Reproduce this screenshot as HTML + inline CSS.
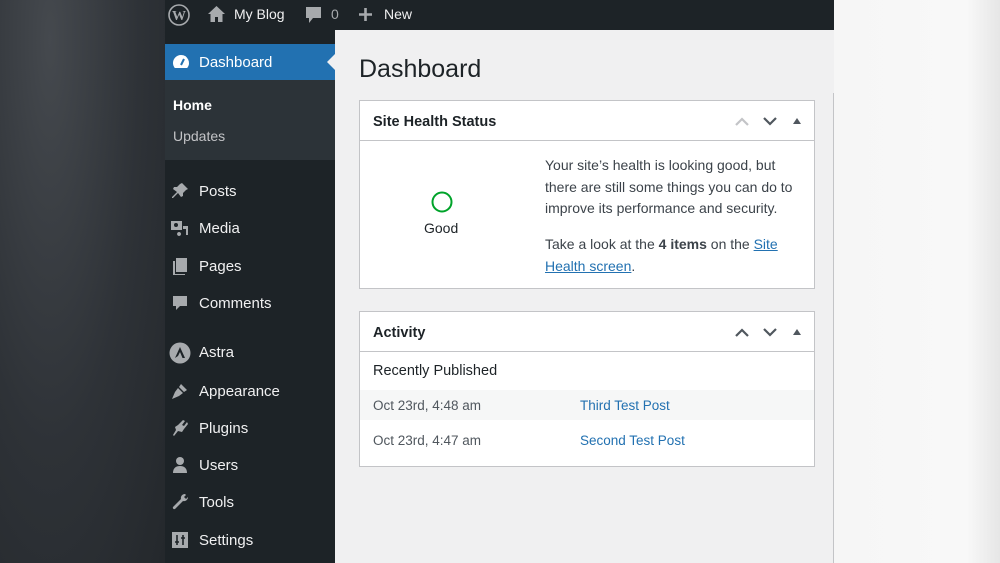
<!DOCTYPE html>
<html><head><meta charset="utf-8"><style>
*{margin:0;padding:0;box-sizing:border-box}
body{width:1000px;height:563px;overflow:hidden;position:relative;font-family:"Liberation Sans",sans-serif;background:#f0f0f1}
.lb{position:absolute;left:0;top:0;width:165px;height:563px;background:radial-gradient(ellipse at 50px 40px,#45494e 0,#2e3237 55%,#24282c 100%)}
.rb{position:absolute;left:834px;top:0;width:166px;height:563px;background:linear-gradient(90deg,#f6f6f6 0,#f8f8f8 80%,#e6e6e6 100%)}
.bar{position:absolute;left:165px;top:0;width:669px;height:30px;background:#1d2327;color:#f0f0f1;font-size:14px}
.bar span{position:absolute;top:6px}
.side{position:absolute;left:165px;top:30px;width:170px;height:533px;background:#1d2327}
.dash{position:absolute;left:0;top:14px;width:170px;height:36px;background:#2271b1;color:#fff;font-size:15px}
.dash:after{content:"";position:absolute;right:0;top:10px;border:8px solid transparent;border-right-color:#f0f0f1}
.sub{position:absolute;left:0;top:50px;width:170px;height:80px;background:#2c3338}
.sub div{position:absolute;left:8px;font-size:14px}
.mi{position:absolute;left:34px;color:#f0f0f1;font-size:15px}
.ic{position:absolute;left:5px;width:20px;height:20px}
.main{position:absolute;left:335px;top:30px;width:499px;height:533px;background:#f0f0f1}
.vl{position:absolute;left:833px;top:93px;width:1px;height:470px;background:#c3c4c7}
h1{position:absolute;left:24px;top:25px;font-weight:400;font-size:25px;color:#1d2327}
.box{position:absolute;left:24px;width:456px;background:#fff;border:1px solid #c3c4c7}
.hd{height:40px;border-bottom:1px solid #c3c4c7;font-weight:bold;font-size:14.5px;color:#1d2327;padding:13px 13px;position:relative}
.ctl{position:absolute;right:0;top:12px}
a{color:#2271b1}
</style></head><body>
<div class="lb"></div><div class="rb"></div>
<div class="bar">
<svg style="position:absolute;left:3px;top:4px" width="22" height="22" viewBox="0 0 22 22"><circle cx="11" cy="11" r="10" fill="none" stroke="#a7aaad" stroke-width="1.6"/><text x="11" y="16" text-anchor="middle" font-size="14" font-weight="bold" fill="#a7aaad" font-family="Liberation Serif">W</text></svg>
<svg style="position:absolute;left:42px;top:5px" width="19" height="18" viewBox="0 0 19 18"><path d="M9.5 1 L1 9 H3.5 V17 H8 V12 H11 V17 H15.5 V9 H18 Z" fill="#a7aaad"/></svg>
<span style="left:69px">My Blog</span>
<svg style="position:absolute;left:140px;top:6px" width="17" height="18" viewBox="0 0 17 18"><path d="M1 1H16V12H8L4 17V12H1Z" fill="#a7aaad"/></svg>
<span style="left:166px;color:#a7aaad">0</span>
<svg style="position:absolute;left:193px;top:7px" width="15" height="15"><path d="M7.5 1v13M1 7.5h13" stroke="#a7aaad" stroke-width="2.6"/></svg>
<span style="left:219px">New</span>
</div>
<div class="side">
<div class="dash"><svg class="ic" style="left:6px;top:8px" viewBox="0 0 20 20"><path d="M10 3a8 8 0 0 0-8 8c0 2 .7 3.6 1.8 5h12.4A8 8 0 0 0 10 3z" fill="#fff"/><path d="M10 13L13 7" stroke="#2271b1" stroke-width="2"/></svg><span style="position:absolute;left:34px;top:10px">Dashboard</span></div>
<div class="sub"><div style="top:17px;color:#fff;font-weight:bold">Home</div><div style="top:48px;color:#c3c4c7">Updates</div></div>
<div class="mi" style="top:153px">Posts</div>
<div class="mi" style="top:190px">Media</div>
<div class="mi" style="top:228px">Pages</div>
<div class="mi" style="top:265px">Comments</div>
<div class="mi" style="top:314px">Astra</div>
<div class="mi" style="top:353px">Appearance</div>
<div class="mi" style="top:390px">Plugins</div>
<div class="mi" style="top:427px">Users</div>
<div class="mi" style="top:464px">Tools</div>
<div class="mi" style="top:502px">Settings</div>
<svg class="ic" style="top:151px" viewBox="0 0 20 20"><path d="M12 2l6 6-2 1-3 3 0 3-2 1-3-4-5 5-1 0 0-1 5-5-4-3 1-2 3 0 3-3z" fill="#a7aaad"/></svg>
<svg class="ic" style="top:188px" viewBox="0 0 20 20"><rect x="1" y="3" width="11" height="9" fill="#a7aaad"/><circle cx="6" cy="7" r="2" fill="#1d2327"/><path d="M13 8h5v9h-2v-6h-3zM9 14a2 2 0 1 0 .1 0z" fill="#a7aaad"/></svg>
<svg class="ic" style="top:226px" viewBox="0 0 20 20"><path d="M6 2h11v14H6z" fill="#a7aaad"/><path d="M3 5h2v13h10v1H3z" fill="#a7aaad"/></svg>
<svg class="ic" style="top:263px" viewBox="0 0 20 20"><path d="M3 3h14v10H10l-4 4v-4H3z" fill="#a7aaad"/></svg>
<svg class="ic" style="top:312px;width:22px;height:22px;left:4px" viewBox="0 0 22 22"><circle cx="11" cy="11" r="10.5" fill="#a7aaad"/><path d="M6 16L11 5l5 11h-2.5L11 10l-2 4z" fill="#1d2327"/></svg>
<svg class="ic" style="top:351px" viewBox="0 0 20 20"><path d="M11 3l6 6-3 2-5-5zM8 7l5 5-4 3-7 3 3-7z" fill="#a7aaad"/></svg>
<svg class="ic" style="top:388px" viewBox="0 0 20 20"><path d="M13 2l2 1-3 4 2 1 3-4 1 2-4 5-2 3-4-1-4 5-1-1 3-5-1-3 3-2z" fill="#a7aaad"/></svg>
<svg class="ic" style="top:425px" viewBox="0 0 20 20"><circle cx="10" cy="6" r="4" fill="#a7aaad"/><path d="M3 18c0-5 3-7 7-7s7 2 7 7z" fill="#a7aaad"/></svg>
<svg class="ic" style="top:462px" viewBox="0 0 20 20"><path d="M15 2a4 4 0 0 0-4 5L3 15a1.5 1.5 0 0 0 2 2l8-8a4 4 0 0 0 5-4l-2 2-2-2 2-2z" fill="#a7aaad"/></svg>
<svg class="ic" style="top:500px" viewBox="0 0 20 20"><rect x="2" y="2" width="16" height="16" fill="#a7aaad"/><path d="M7 5v10M5 12h4M13 5v10M11 8h4" stroke="#1d2327" stroke-width="1.6"/></svg>
</div>
<div class="main">
<h1>Dashboard</h1>
<div class="box" style="top:70px;height:189px">
<div class="hd">Site Health Status<svg class="ctl" width="80" height="16" viewBox="0 0 80 16"><path d="M2 12l6-6 6 6" fill="none" stroke="#c3c4c7" stroke-width="2.2"/><path d="M30 5l6 6 6-6" fill="none" stroke="#50575e" stroke-width="2.2"/><path d="M59 11l4-6 4 6z" fill="#50575e"/></svg></div>
<svg style="position:absolute;left:70px;top:89px" width="24" height="24"><circle cx="12" cy="12" r="9.5" fill="none" stroke="#00a32a" stroke-width="2"/></svg>
<div style="position:absolute;left:64px;top:119px;font-size:14px;color:#1d2327">Good</div>
<div style="position:absolute;left:185px;top:54px;width:265px;font-size:14px;line-height:21.7px;color:#3c434a">Your site’s health is looking good, but there are still some things you can do to improve its performance and security.<div style="margin-top:14px">Take a look at the <b>4 items</b> on the <a href="#">Site Health screen</a>.</div></div>
</div>
<div class="box" style="top:281px;height:156px">
<div class="hd">Activity<svg class="ctl" width="80" height="16" viewBox="0 0 80 16"><path d="M2 12l6-6 6 6" fill="none" stroke="#50575e" stroke-width="2.2"/><path d="M30 5l6 6 6-6" fill="none" stroke="#50575e" stroke-width="2.2"/><path d="M59 11l4-6 4 6z" fill="#50575e"/></svg></div>
<div style="padding:11px 13px;font-size:14.5px;color:#1d2327">Recently Published</div>
<div style="position:absolute;left:0;top:78px;width:100%;height:30px;background:#f6f7f7"></div>
<div style="position:absolute;left:13px;top:86px;font-size:13.5px;color:#50575e">Oct 23rd, 4:48 am</div>
<div style="position:absolute;left:220px;top:86px;font-size:13.5px;color:#2271b1">Third Test Post</div>
<div style="position:absolute;left:13px;top:121px;font-size:13.5px;color:#50575e">Oct 23rd, 4:47 am</div>
<div style="position:absolute;left:220px;top:121px;font-size:13.5px;color:#2271b1">Second Test Post</div>
</div>
</div>
<div class="vl"></div>
</body></html>
